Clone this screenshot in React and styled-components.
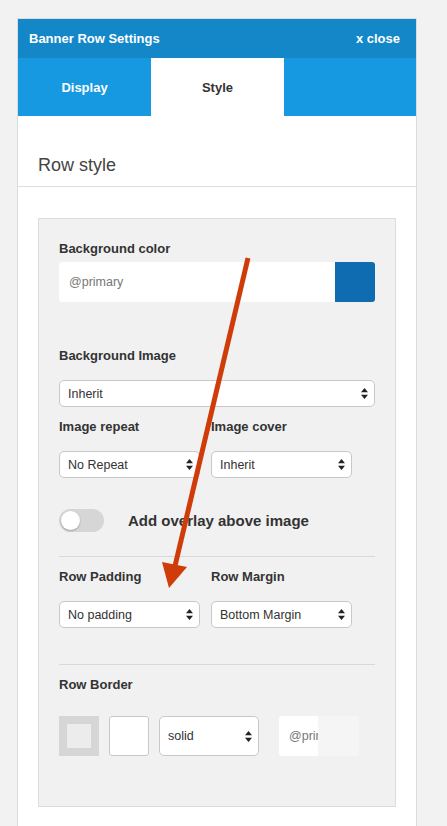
import React from 'react';
import styled, { createGlobalStyle } from 'styled-components';

const GlobalStyle = createGlobalStyle`
  html, body {
    margin: 0;
    padding: 0;
    background: #f2f2f2;
    font-family: "Liberation Sans", Arial, sans-serif;
    color: #333;
  }
`;

const Page = styled.div`
  position: relative;
  width: 447px;
  height: 826px;
  overflow: hidden;
  padding-top: 19px;
  box-sizing: border-box;
`;

const Panel = styled.div`
  margin-left: 18px;
  width: 398px;
  height: 807px;
  background: #fff;
  box-shadow: 0 0 0 1px #dcdcdc;
  display: flex;
  flex-direction: column;
`;

const Header = styled.div`
  height: 39px;
  background: #1387c8;
  color: #fff;
  display: flex;
  align-items: center;
  justify-content: space-between;
  padding: 0 16px 0 11px;
  font-size: 13px;
  font-weight: 700;
`;

const Tabs = styled.div`
  display: flex;
  height: 58px;
  background: #1699e0;
`;

const Tab = styled.div`
  width: 133px;
  display: flex;
  align-items: center;
  justify-content: center;
  font-size: 13px;
  font-weight: 700;
  color: ${p => (p.$active ? '#333' : '#fff')};
  background: ${p => (p.$active ? '#fff' : 'transparent')};
`;

const SectionTitle = styled.div`
  height: 71px;
  box-sizing: border-box;
  padding: 0 20px 10px;
  display: flex;
  align-items: flex-end;
  font-size: 18px;
  color: #444;
  border-bottom: 1px solid #dedede;
`;

const Box = styled.div`
  margin: 31px 20px 0;
  background: #f1f1f1;
  border: 1px solid #dcdcdc;
  padding: 22px 20px 50px;
  display: flex;
  flex-direction: column;
`;

const Label = styled.div`
  font-size: 13px;
  font-weight: 700;
  line-height: 16px;
  color: #333;
  margin-top: ${p => p.$top || 0}px;
`;

const ColorInput = styled.div`
  margin-top: 5px;
  height: 40px;
  display: flex;
  border-radius: 3px;
  overflow: hidden;
  background: #fff;
`;

const ColorText = styled.input`
  flex: 1;
  min-width: 0;
  border: none;
  outline: none;
  background: transparent;
  padding: 0 0 0 10px;
  font-family: inherit;
  font-size: 12.5px;
  color: #777;
`;

const Swatch = styled.div`
  width: ${p => p.$w}px;
  flex: none;
  background: ${p => p.$color};
`;

const Row = styled.div`
  display: flex;
  gap: ${p => p.$gap ?? 11}px;
  margin-top: ${p => p.$top || 0}px;
  align-items: ${p => p.$align || 'stretch'};
`;

const Col = styled.div`
  width: ${p => p.$w}px;
  display: flex;
  flex-direction: column;
`;

const SelectBox = styled.div`
  width: ${p => (p.$w ? `${p.$w}px` : 'auto')};
  height: ${p => p.$h || 27}px;
  margin-top: ${p => p.$top || 0}px;
  box-sizing: border-box;
  background: #fff;
  border: 1px solid #c8c8c8;
  border-radius: 5px;
  display: flex;
  align-items: center;
  justify-content: space-between;
  padding: 0 6px 0 8px;
  font-size: 12.5px;
  color: #333;
`;

const Arrows = () => (
  <svg width="7" height="11" viewBox="0 0 7 11">
    <path d="M3.5 0 L7 4.3 L0 4.3 Z M0 6.7 L7 6.7 L3.5 11 Z" fill="#222" />
  </svg>
);

const Select = ({ children, ...rest }) => (
  <SelectBox {...rest}>
    <span>{children}</span>
    <Arrows />
  </SelectBox>
);

const Toggle = styled.div`
  width: 45px;
  height: 23px;
  border-radius: 12px;
  background: #d6d6d6;
  display: flex;
  align-items: center;
  padding-left: 2px;
  box-sizing: border-box;
`;

const Knob = styled.div`
  width: 19px;
  height: 19px;
  border-radius: 50%;
  background: #fff;
  box-shadow: 0 1px 2px rgba(0, 0, 0, 0.25);
`;

const ToggleLabel = styled.div`
  font-size: 15px;
  font-weight: 700;
  color: #333;
  margin-left: 24px;
`;

const Divider = styled.div`
  height: 1px;
  background: #d8d8d8;
  margin-top: ${p => p.$top}px;
`;

const BorderPreview = styled.div`
  width: 40px;
  height: 40px;
  background: #d6d6d6;
  display: flex;
  align-items: center;
  justify-content: center;
`;

const BorderInner = styled.div`
  width: 24px;
  height: 24px;
  background: #ececec;
`;

const WidthBox = styled.div`
  width: 40px;
  height: 40px;
  box-sizing: border-box;
  background: #fff;
  border: 1px solid #c8c8c8;
  border-radius: 3px;
`;

const SmallColor = styled(ColorInput)`
  margin-top: 0;
  margin-left: 10px;
  width: 80px;
  flex: none;
`;

const Overlay = styled.svg`
  position: absolute;
  left: 0;
  top: 0;
  pointer-events: none;
`;

export default function App() {
  return (
    <Page>
      <GlobalStyle />
      <Panel>
        <Header>
          <span>Banner Row Settings</span>
          <span>x close</span>
        </Header>
        <Tabs>
          <Tab>Display</Tab>
          <Tab $active>Style</Tab>
        </Tabs>
        <SectionTitle>Row style</SectionTitle>
        <Box>
          <Label>Background color</Label>
          <ColorInput>
            <ColorText readOnly value="@primary" />
            <Swatch $w={40} $color="#106cb0" />
          </ColorInput>

          <Label $top={46}>Background Image</Label>
          <Select $top={16}>Inherit</Select>

          <Row $top={12}>
            <Col $w={141}>
              <Label>Image repeat</Label>
              <Select $top={16}>No Repeat</Select>
            </Col>
            <Col $w={141}>
              <Label>Image cover</Label>
              <Select $top={16}>Inherit</Select>
            </Col>
          </Row>

          <Row $top={31} $gap={0} $align="center">
            <Toggle><Knob /></Toggle>
            <ToggleLabel>Add overlay above image</ToggleLabel>
          </Row>

          <Divider $top={24} />

          <Row $top={12}>
            <Col $w={141}>
              <Label>Row Padding</Label>
              <Select $top={16}>No padding</Select>
            </Col>
            <Col $w={141}>
              <Label>Row Margin</Label>
              <Select $top={16}>Bottom Margin</Select>
            </Col>
          </Row>

          <Divider $top={36} />

          <Label $top={12}>Row Border</Label>
          <Row $top={23} $gap={10}>
            <BorderPreview><BorderInner /></BorderPreview>
            <WidthBox />
            <Select $w={100} $h={40}>solid</Select>
            <SmallColor>
              <ColorText readOnly value="@primary" />
              <Swatch $w={41} $color="#f5f5f5" />
            </SmallColor>
          </Row>
        </Box>
      </Panel>
      <Overlay width="447" height="826" viewBox="0 0 447 826">
        <line x1="248" y1="258" x2="175" y2="566" stroke="#cf3c0a" strokeWidth="5" />
        <polygon points="162,562 187,567 169,588" fill="#cf3c0a" />
      </Overlay>
    </Page>
  );
}
